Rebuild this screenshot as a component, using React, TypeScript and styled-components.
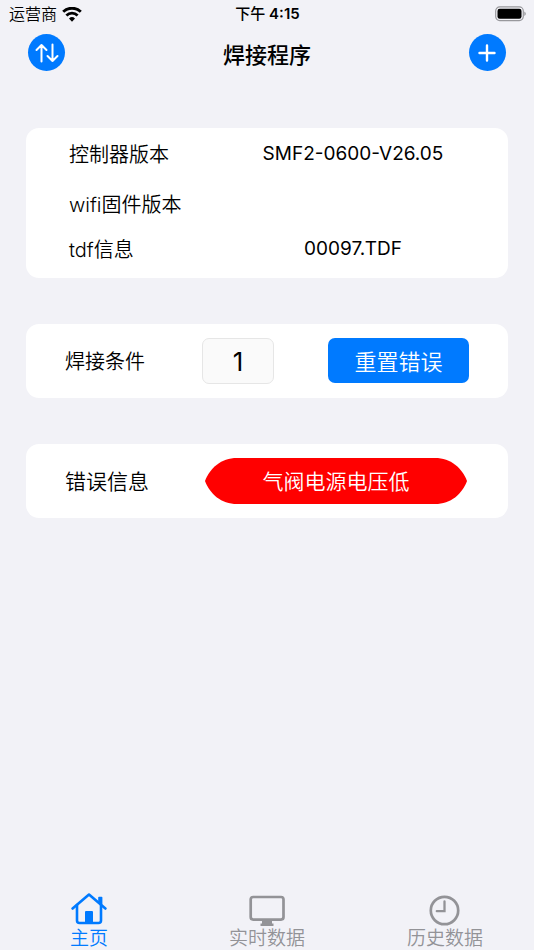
import React, { useState } from 'react';
import styled, { createGlobalStyle } from 'styled-components';

const BLUE = '#007aff';
const GREY = '#939397';

const GlobalStyle = createGlobalStyle`
  * { box-sizing: border-box; }
  body {
    margin: 0;
    background: #f2f2f7;
    color: #000;
    font-family: Inter, "Noto Sans CJK SC", sans-serif;
  }
  button, input { font-family: inherit; }
`;

const Screen = styled.div`
  min-height: 100vh;
  display: flex;
  flex-direction: column;
`;

const StatusBar = styled.div`
  height: 28px;
  padding: 0 8px 0 9px;
  display: grid;
  grid-template-columns: 1fr auto 1fr;
  align-items: center;
  font-size: 16px;
  line-height: 28px;
`;

const Carrier = styled.div`
  display: flex;
  align-items: center;
  gap: 5px;
  font-weight: 350;
`;

const Clock = styled.time`
  font-size: 15px;
  font-weight: 600;
`;

const DayPeriod = styled.span`
  font-weight: 500;
`;

const BatteryIcon = styled.svg`
  justify-self: end;
`;

const Header = styled.header`
  height: 49px;
  padding: 0 28px;
  display: flex;
  align-items: center;
  justify-content: space-between;
`;

const Title = styled.h1`
  margin: 0;
  padding-top: 4px;
  font-size: 22px;
  line-height: 32px;
  font-weight: 500;
`;

const RoundButton = styled.button`
  width: 37px;
  height: 37px;
  padding: 0;
  border: 0;
  border-radius: 50%;
  background: ${BLUE};
  display: grid;
  place-items: center;
`;

const Main = styled.main`
  flex: 1;
  padding: 51px 26px 0;
  display: flex;
  flex-direction: column;
  gap: 46px;
`;

const Card = styled.section`
  background: #fff;
  border-radius: 13px;
`;

const InfoList = styled.dl`
  margin: 0;
  padding: 0 0 8px 43px;
  display: grid;
  grid-template-columns: 129px 1fr;
  grid-template-rows: 52px 47px 43px;
  align-items: center;
  line-height: 28px;
`;

const InfoLabel = styled.dt`
  padding-top: 2px;
  font-size: 20px;
  font-weight: 350;
  white-space: nowrap;
`;

const InfoValue = styled.dd`
  margin: 0;
  font-size: 19px;
  text-align: center;
`;

const ControlRow = styled.div<{ $columns: string }>`
  padding: 14px 39px;
  display: grid;
  grid-template-columns: ${(p) => p.$columns};
  align-items: center;
`;

const FieldLabel = styled.label<{ $size: number }>`
  padding-top: 2px;
  font-size: ${(p) => p.$size}px;
  line-height: 28px;
  font-weight: 350;
  white-space: nowrap;
`;

const ConditionInput = styled.input`
  width: 100%;
  min-width: 0;
  height: 46px;
  padding: 0;
  border: 1px solid #e6e6e6;
  border-radius: 7px;
  background: #fafafa;
  color: #000;
  font-size: 26px;
  text-align: center;
  outline: none;
`;

const ResetButton = styled.button`
  grid-column: 4;
  align-self: start;
  height: 45px;
  padding: 0 0 1px;
  border: 0;
  border-radius: 7px;
  background: ${BLUE};
  color: #fff;
  font-size: 22px;
  font-weight: 350;
`;

const Alert = styled.output`
  display: flex;
  height: 46px;
`;

const AlertCap = styled.svg`
  flex: none;
  display: block;
  fill: #f00;
`;

const AlertText = styled.span`
  flex: 1;
  padding-top: 1px;
  background: #f00;
  color: #fff;
  font-size: 21px;
  line-height: 46px;
  font-weight: 350;
  white-space: nowrap;
  display: flex;
  justify-content: center;
`;

const TabBar = styled.nav`
  display: grid;
  grid-template-columns: repeat(3, 1fr);
`;

const Tab = styled.a<{ $active?: boolean }>`
  display: flex;
  flex-direction: column;
  align-items: center;
  color: ${(p) => (p.$active ? BLUE : GREY)};
  font-size: 19px;
  line-height: 23px;
  font-weight: 350;
  text-decoration: none;
`;

const HomeIcon = () => (
  <svg width="36" height="35" viewBox="0 0 36 35" fill="none" stroke="currentColor" strokeWidth="2.600" strokeLinecap="round" strokeLinejoin="round">
    <path d="M1.600 16.500 18 2.500l16.400 14" />
    <path d="M6 13v15.500q0 2.500 2.500 2.500h19q2.500 0 2.500-2.500V13" />
    <path d="M28 10V5.500h2.600V12z" fill="currentColor" strokeWidth="1.600" />
    <path d="M14 31V20q0-1 1-1h6q1 0 1 1v11z" fill="currentColor" stroke="none" />
  </svg>
);

const MonitorIcon = () => (
  <svg width="36" height="35" viewBox="0 0 36 35" fill="none">
    <rect x="1.700" y="5" width="32.800" height="22.600" rx="2.500" stroke="currentColor" strokeWidth="2.700" />
    <path d="M13 28h10v3.500h1.500V34h-13v-2.500H13z" fill="currentColor" />
  </svg>
);

const HistoryIcon = () => (
  <svg width="36" height="35" viewBox="0 0 36 35" fill="none" stroke="currentColor" strokeLinecap="round">
    <circle cx="17.500" cy="18.500" r="13.700" strokeWidth="2.700" />
    <path d="M17.500 9.500v9.700H9.800" strokeWidth="2.300" />
  </svg>
);

const WifiIcon = () => (
  <svg width="20" height="15" viewBox="0 0 20 15" fill="none" stroke="#000">
    <path d="M1.200 4.800a12.600 12.600 0 0 1 17.600 0" strokeWidth="2.900" />
    <path d="M4.400 8.500a8 8 0 0 1 11.200 0" strokeWidth="2.800" />
    <path d="M10 14.700 7 11.500a4.300 4.300 0 0 1 6 0z" fill="#000" stroke="none" />
  </svg>
);

const tabs = [
  { label: '主页', icon: <HomeIcon />, href: '#home' },
  { label: '实时数据', icon: <MonitorIcon />, href: '#live' },
  { label: '历史数据', icon: <HistoryIcon />, href: '#history' },
];

const info = [
  { label: '控制器版本', value: 'SMF2-0600-V26.05' },
  { label: 'wifi固件版本', value: '' },
  { label: 'tdf信息', value: '00097.TDF' },
];

export default function App() {
  const [condition, setCondition] = useState('1');
  const [active, setActive] = useState('#home');

  return (
    <Screen>
      <GlobalStyle />
      <StatusBar>
        <Carrier>
          运营商
          <WifiIcon />
        </Carrier>
        <Clock>
          <DayPeriod>下午</DayPeriod> 4:15
        </Clock>
        <BatteryIcon width="31" height="16" viewBox="0 0 31 16">
          <rect x="0.700" y="0.900" width="27.600" height="13.700" rx="4" fill="none" stroke="#98989c" strokeWidth="1.200" />
          <rect x="2.500" y="2.700" width="24" height="10.100" rx="2.200" fill="#000" />
          <path d="M29.300 5.500q1.500.8 1.500 2.300t-1.500 2.300z" fill="#98989c" />
        </BatteryIcon>
      </StatusBar>

      <Header>
        <RoundButton type="button" aria-label="传输">
          <svg width="24" height="20" viewBox="0 0 24 20" fill="none" stroke="#fff" strokeWidth="2" strokeLinecap="round" strokeLinejoin="round">
            <path d="M6.500 18.500V2M1.500 7l5-5 5 5M17.500 1.500V18M12.500 13l5 5 5-5" />
          </svg>
        </RoundButton>
        <Title>焊接程序</Title>
        <RoundButton type="button" aria-label="添加">
          <svg width="18" height="18" viewBox="0 0 18 18" stroke="#fff" strokeWidth="2.400" strokeLinecap="round">
            <path d="M9 1.500v15M1.500 9h15" />
          </svg>
        </RoundButton>
      </Header>

      <Main>
        <Card>
          <InfoList>
            {info.map((row) => (
              <React.Fragment key={row.label}>
                <InfoLabel>{row.label}</InfoLabel>
                <InfoValue>{row.value}</InfoValue>
              </React.Fragment>
            ))}
          </InfoList>
        </Card>

        <Card>
          <ControlRow $columns="137fr 72fr 54fr 141fr">
            <FieldLabel $size={20} htmlFor="condition">焊接条件</FieldLabel>
            <ConditionInput
              id="condition"
              inputMode="numeric"
              value={condition}
              onChange={(e) => setCondition(e.target.value)}
            />
            <ResetButton type="button">重置错误</ResetButton>
          </ControlRow>
        </Card>

        <Card>
          <ControlRow $columns="140fr 262fr 2fr">
            <FieldLabel $size={21} htmlFor="error">错误信息</FieldLabel>
            <Alert id="error">
              <AlertCap width="32" height="46" viewBox="0 0 32 46">
                <path d="M0 23C5 10 16 0 32 0V46C16 46 5 36 0 23z" />
              </AlertCap>
              <AlertText>气阀电源电压低</AlertText>
              <AlertCap width="32" height="46" viewBox="0 0 32 46">
                <path d="M32 23C27 10 16 0 0 0V46C16 46 27 36 32 23z" />
              </AlertCap>
            </Alert>
          </ControlRow>
        </Card>
      </Main>

      <TabBar>
        {tabs.map((tab) => (
          <Tab key={tab.href} href={tab.href} $active={active === tab.href} onClick={() => setActive(tab.href)}>
            {tab.icon}
            {tab.label}
          </Tab>
        ))}
      </TabBar>
    </Screen>
  );
}
